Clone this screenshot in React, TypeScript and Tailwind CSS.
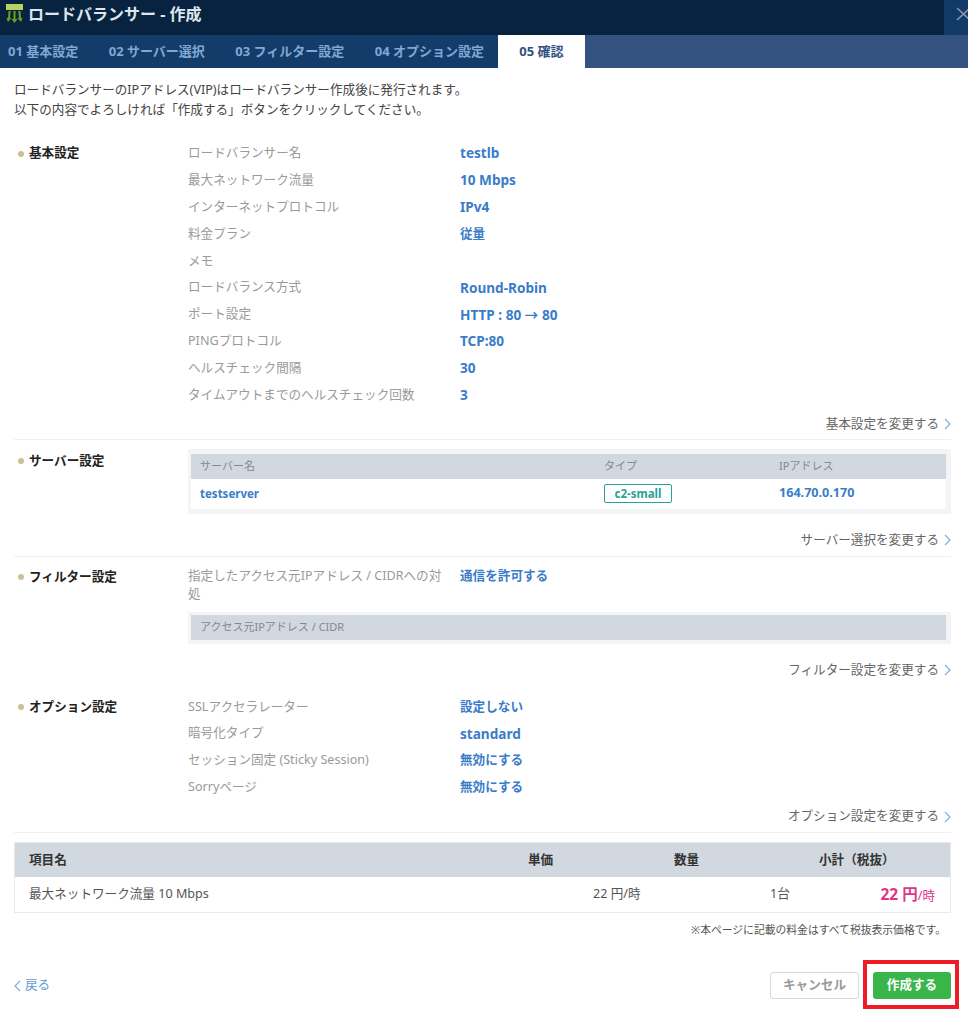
const font = '[font-family:"Noto_Sans","Noto_Sans_CJK_JP",sans-serif]';

const basicRows = [
  ['ロードバランサー名', 'testlb'],
  ['最大ネットワーク流量', '10 Mbps'],
  ['インターネットプロトコル', 'IPv4'],
  ['料金プラン', '従量'],
  ['メモ', ''],
  ['ロードバランス方式', 'Round-Robin'],
  ['ポート設定', 'HTTP : 80 → 80'],
  ['PINGプロトコル', 'TCP:80'],
  ['ヘルスチェック間隔', '30'],
  ['タイムアウトまでのヘルスチェック回数', '3'],
];

const optionRows = [
  ['SSLアクセラレーター', '設定しない'],
  ['暗号化タイプ', 'standard'],
  ['セッション固定 (Sticky Session)', '無効にする'],
  ['Sorryページ', '無効にする'],
];

const tabs = ['01 基本設定', '02 サーバー選択', '03 フィルター設定', '04 オプション設定'];

const Chevron = ({ left = false }: { left?: boolean }) => (
  <svg width="7" height="12" viewBox="0 0 7 12" fill="none" className="shrink-0">
    <path
      d={left ? 'M6 1 1 6l5 5' : 'M1 1l5 5-5 5'}
      stroke="#7fb0de"
      strokeWidth="1.2"
    />
  </svg>
);

const Logo = () => (
  <svg width="19" height="20" viewBox="0 0 19 20" className="mt-[1px] shrink-0">
    <rect x="1" y="0" width="17" height="6" fill="#b4d45f" />
    <path d="M8.5 7h2v8h2l-3 4-3-4h2z" fill="#6f9e1f" />
    <path d="M3.5 7h2.2L5 14h1.5L3 18l-1.5-4H3zM13.3 7h2.2l.5 7h1.5L16 18l-3.5-4H14z" fill="#6f9e1f" />
  </svg>
);

const Row = ({ label, value }: { label: string; value: string }) => (
  <div className="flex h-[26.9px] items-center">
    <div className="w-[272px] text-[12.6px] text-[#9a9a9a]">{label}</div>
    <div
      className={`font-bold text-[#3b7cc9] ${
        /^[a-zA-Z0-9 :→-]+$/.test(value) ? 'text-[13.6px]' : 'text-[12.6px]'
      }`}
    >
      {value}
    </div>
  </div>
);

const SectionTitle = ({ children }: { children: string }) => (
  <div className="flex h-[27px] w-[174px] shrink-0 items-center pl-[4px] text-[12.6px] font-bold text-[#222]">
    <span className="mr-[5px] size-[6px] rounded-full bg-[#c9c094]" />
    {children}
  </div>
);

const ChangeLink = ({ children }: { children: string }) => (
  <div className="flex items-center justify-end gap-[5px] text-[12.6px] text-[#666]">
    {children}
    <Chevron />
  </div>
);

const App = () => {
  return (
    <div className={`h-[1024px] w-[976px] overflow-hidden bg-white ${font}`}>
      <div className="w-[968px]">
        <div className="flex h-[35px] bg-[#08233f]">
          <div className="ml-[5px] flex h-[27px] flex-1 items-center gap-[4px] text-[16px] font-bold text-[#dfe6ee]">
            <Logo />
            ロードバランサー - 作成
          </div>
          <div className="flex h-full w-[24px] justify-end overflow-hidden bg-[#123a66] pt-[7px]">
            <svg width="12" height="14" viewBox="0 0 12 14" className="shrink-0">
              <path d="M1 1l13 12M14 1 1 13" stroke="#8a95a3" strokeWidth="1.6" />
            </svg>
          </div>
        </div>
        <div className="flex h-[33px] bg-[#33527f] text-[13px] font-bold">
          <div className="flex w-[498px] items-center justify-between bg-[#143c6a] pr-[14px] pl-[8px] text-[#7fa8d4]">
            {tabs.map((tab) => (
              <span key={tab}>{tab}</span>
            ))}
          </div>
          <div className="flex w-[87px] items-center justify-center bg-white text-[#33527f]">
            05 確認
          </div>
        </div>
      </div>

      <div className="w-[951px] pl-[14px]">
        <div className="pt-[12px] text-[12.6px] leading-[20px] text-[#444]">
          <p>ロードバランサーのIPアドレス(VIP)はロードバランサー作成後に発行されます。</p>
          <p>以下の内容でよろしければ「作成する」ボタンをクリックしてください。</p>
        </div>

        <div className="mt-[20px] flex">
          <SectionTitle>基本設定</SectionTitle>
          <div className="flex-1">
            {basicRows.map(([label, value]) => (
              <Row key={label} label={label} value={value} />
            ))}
          </div>
        </div>
        <div className="mt-[6px] border-b border-[#eef0f3] pb-[5px]">
          <ChangeLink>基本設定を変更する</ChangeLink>
        </div>

        <div className="mt-[9px] flex">
          <div className="-mt-[1px]">
            <SectionTitle>サーバー設定</SectionTitle>
          </div>
          <div className="flex-1 bg-[#f3f4f6] py-[5px] pr-[5px] pl-[3px]">
            <div className="flex h-[25px] items-center bg-[#d2d8e0] text-[11px] text-[#888]">
              <div className="w-[413px] pl-[9px]">サーバー名</div>
              <div className="w-[175px]">タイプ</div>
              <div>IPアドレス</div>
            </div>
            <div className="flex h-[30px] items-center bg-white text-[11.5px] font-bold text-[#3b7cc9]">
              <div className="w-[413px] pl-[9px]">testserver</div>
              <div className="w-[175px]">
                <span className="flex h-[19px] w-[68px] items-center justify-center rounded-[2px] border border-[#2aa198] text-[#2aa198]">
                  c2-small
                </span>
              </div>
              <div className="text-[12.6px]">164.70.0.170</div>
            </div>
          </div>
        </div>
        <div className="mt-[17px] border-b border-[#eef0f3] pb-[6px]">
          <ChangeLink>サーバー選択を変更する</ChangeLink>
        </div>

        <div className="mt-[10px] flex">
          <div className="-mt-[3px]">
            <SectionTitle>フィルター設定</SectionTitle>
          </div>
          <div className="flex-1">
            <div className="flex text-[12.6px] leading-[18px]">
              <div className="w-[272px] pr-[8px] text-[#9a9a9a]">
                指定したアクセス元IPアドレス / CIDRへの対
                <br />処
              </div>
              <div className="font-bold text-[#3b7cc9]">通信を許可する</div>
            </div>
            <div className="mt-[9px] bg-[#f3f4f6] pt-[3px] pr-[5px] pb-[4px] pl-[3px]">
              <div className="flex h-[25px] items-center bg-[#d2d8e0] pl-[9px] text-[11px] text-[#888]">
                アクセス元IPアドレス / CIDR
              </div>
            </div>
          </div>
        </div>
        <div className="mt-[17px]">
          <ChangeLink>フィルター設定を変更する</ChangeLink>
        </div>

        <div className="mt-[14px] flex">
          <SectionTitle>オプション設定</SectionTitle>
          <div className="flex-1">
            {optionRows.map(([label, value]) => (
              <Row key={label} label={label} value={value} />
            ))}
          </div>
        </div>
        <div className="mt-[6px] border-b border-[#eef0f3] pb-[6px]">
          <ChangeLink>オプション設定を変更する</ChangeLink>
        </div>

        <div className="mt-[9px] border border-[#e6e9ed]">
          <div className="flex h-[34px] items-center bg-[#d2d8e0] text-[12.6px] font-bold text-[#333]">
            <div className="w-[513px] pl-[14px]">項目名</div>
            <div className="w-[146px]">単価</div>
            <div className="w-[145px]">数量</div>
            <div>小計（税抜）</div>
          </div>
          <div className="flex h-[35px] items-center text-[12.6px] text-[#555]">
            <div className="w-[578px] pl-[14px]">最大ネットワーク流量 10 Mbps</div>
            <div className="w-[177px]">22 円/時</div>
            <div className="flex-1">1台</div>
            <div className="pr-[15px] text-[#e0348c]">
              <span className="text-[15.5px] font-bold">22 円</span>/時
            </div>
          </div>
        </div>
        <div className="mt-[9px] pr-[5px] text-right text-[10.8px] text-[#555]">
          ※本ページに記載の料金はすべて税抜表示価格です。
        </div>

        <div className="mt-[34px] flex items-center justify-between">
          <div className="flex items-center gap-[4px] text-[12.6px] text-[#5b9bd5]">
            <Chevron left />
            戻る
          </div>
          <div className="flex items-center gap-[14px]">
            <div className="flex h-[27px] w-[89px] items-center justify-center rounded-[3px] border border-[#d9d9d9] text-[12.6px] font-bold text-[#999]">
              キャンセル
            </div>
            <div className="relative flex h-[27px] w-[78px] items-center justify-center rounded-[3px] bg-[#39b54a] text-[12.6px] font-bold text-white">
              作成する
              <span className="absolute -top-[12px] -right-[8px] -bottom-[10px] -left-[10px] border-[4px] border-[#ee1c25]" />
            </div>
          </div>
        </div>
      </div>
    </div>
  );
};

export default App;
